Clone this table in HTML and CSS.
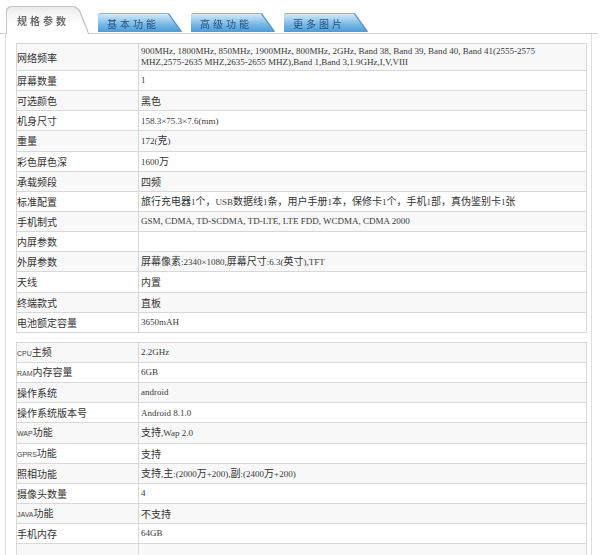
FILE: index.html
```html
<!DOCTYPE html>
<html lang="zh-CN">
<head>
<meta charset="utf-8">
<title>规格参数</title>
<link rel="stylesheet" href="styles.css">
</head>
<body>
<div class="page">
  <div class="tabs">
    <div class="tab-wrap tab-wrap-active"><div class="tab tab-active">规格参数</div></div>
    <div class="tab-wrap tab-wrap-blue"><div class="tab tab-blue">基本功能</div></div>
    <div class="tab-wrap tab-wrap-blue"><div class="tab tab-blue">高级功能</div></div>
    <div class="tab-wrap tab-wrap-blue"><div class="tab tab-blue">更多图片</div></div>
  </div>
  <div class="panel">
    <table class="spec">
      <colgroup><col class="col-label"><col></colgroup>
      <tr class="tall"><td class="k">网络频率</td><td class="v a">900MHz, 1800MHz, 850MHz, 1900MHz, 800MHz, 2GHz, Band 38, Band 39, Band 40, Band 41(2555-2575<br>MHZ,2575-2635 MHZ,2635-2655 MHZ),Band 1,Band 3,1.9GHz,I,V,VIII</td></tr>
      <tr><td class="k">屏幕数量</td><td class="v a">1</td></tr>
      <tr><td class="k">可选颜色</td><td class="v">黑色</td></tr>
      <tr><td class="k">机身尺寸</td><td class="v a">158.3×75.3×7.6(mm)</td></tr>
      <tr><td class="k">重量</td><td class="v"><span class="a">172(</span>克<span class="a">)</span></td></tr>
      <tr><td class="k">彩色屏色深</td><td class="v"><span class="a">1600</span>万</td></tr>
      <tr><td class="k">承载频段</td><td class="v">四频</td></tr>
      <tr><td class="k">标准配置</td><td class="v">旅行充电器<span class="a">1</span>个，<span class="a">USB</span>数据线<span class="a">1</span>条，用户手册<span class="a">1</span>本，保修卡<span class="a">1</span>个，手机<span class="a">1</span>部，真伪鉴别卡<span class="a">1</span>张</td></tr>
      <tr><td class="k">手机制式</td><td class="v a">GSM, CDMA, TD-SCDMA, TD-LTE, LTE FDD, WCDMA, CDMA 2000</td></tr>
      <tr><td class="k">内屏参数</td><td class="v"></td></tr>
      <tr><td class="k">外屏参数</td><td class="v">屏幕像素<span class="a">:2340×1080,</span>屏幕尺寸<span class="a">:6.3(</span>英寸<span class="a">),TFT</span></td></tr>
      <tr><td class="k">天线</td><td class="v">内置</td></tr>
      <tr><td class="k">终端款式</td><td class="v">直板</td></tr>
      <tr><td class="k">电池额定容量</td><td class="v a">3650mAH</td></tr>
    </table>
    <table class="spec spec-second">
      <colgroup><col class="col-label"><col></colgroup>
      <tr><td class="k"><span class="s">CPU</span>主频</td><td class="v a">2.2GHz</td></tr>
      <tr><td class="k"><span class="s">RAM</span>内存容量</td><td class="v a">6GB</td></tr>
      <tr><td class="k">操作系统</td><td class="v a">android</td></tr>
      <tr><td class="k">操作系统版本号</td><td class="v a">Android 8.1.0</td></tr>
      <tr><td class="k"><span class="s">WAP</span>功能</td><td class="v">支持<span class="a">,Wap 2.0</span></td></tr>
      <tr><td class="k"><span class="s">GPRS</span>功能</td><td class="v">支持</td></tr>
      <tr><td class="k">照相功能</td><td class="v">支持<span class="a">,</span>主<span class="a">:(2000</span>万<span class="a">+200),</span>副<span class="a">:(2400</span>万<span class="a">+200)</span></td></tr>
      <tr><td class="k">摄像头数量</td><td class="v a">4</td></tr>
      <tr><td class="k"><span class="s">JAVA</span>功能</td><td class="v">不支持</td></tr>
      <tr><td class="k">手机内存</td><td class="v a">64GB</td></tr>
      <tr><td class="k"></td><td class="v"></td></tr>
    </table>
  </div>
</div>
</body>
</html>
```
FILE: styles.css
```css
html, body {
  margin: 0;
  padding: 0;
  background: #fff;
}

body {
  font-family: "Noto Sans CJK SC", "Noto Sans", sans-serif;
  font-size: 10px;
  color: #333;
  overflow: hidden;
}

.page {
  width: 598px;
}

/* ---------- tabs ---------- */
.tabs {
  display: flex;
  align-items: flex-end;
  gap: 10px;
  height: 33px;
  padding-left: 7px;
  border-bottom: 1px solid #d2d2d2;
}

.tab-wrap-active {
  margin-bottom: -1px;
  filter: drop-shadow(1px 0 0 #c6c6c6) drop-shadow(-1px 0 0 #c6c6c6) drop-shadow(0 -1px 0 #c6c6c6);
}

.tab-wrap-blue {
  margin-bottom: 1px;
  filter: drop-shadow(1px 0 0 #4f8bc2) drop-shadow(0 -1px 0 #86b8e0);
}

.tab {
  display: flex;
  align-items: center;
  font-size: 10px;
  letter-spacing: 3px;
  white-space: nowrap;
}

.tab-active {
  width: 81px;
  height: 27px;
  padding-left: 10px;
  box-sizing: border-box;
  border-top-left-radius: 5px;
  clip-path: polygon(0 0, 67px 0, 72px 4px, 100% 100%, 0 100%);
  background: linear-gradient(to bottom, #e9e9e9 0%, #f7f7f7 30%, #ffffff 70%);
  color: #6a6a6a;
  font-weight: bold;
}

.tab-blue {
  width: 83px;
  height: 18px;
  padding-left: 9px;
  box-sizing: border-box;
  border-top-left-radius: 3px;
  clip-path: polygon(0 0, 70px 0, 100% 100%, 0 100%);
  background: linear-gradient(to bottom, #d4eaf9 0%, #a7d2f0 28%, #74b6e5 60%, #4f9bd7 100%);
  color: #1f4f80;
}

/* ---------- panel ---------- */
.panel {
  box-sizing: border-box;
  width: 587px;
  margin-left: 5px;
  padding: 9px 4px 0 10px;
  border-left: 1px solid #dedede;
  border-right: 1px solid #dedede;
}

.spec {
  width: 100%;
  table-layout: fixed;
  border-collapse: collapse;
  border: 1px solid #cfcfcf;
}

.spec-second {
  margin-top: 9px;
}

.col-label {
  width: 122px;
}

.spec td {
  height: 19.15px;
  padding: 0;
  border: 1px solid #d8d8d8;
  vertical-align: middle;
  line-height: 11px;
}

.spec tr:nth-child(odd) {
  background: #f8f8f8;
}

.spec tr.tall td {
  height: 26px;
}

.k {
  padding-left: 0 !important;
  font-size: 10px;
  color: #333;
  white-space: nowrap;
}

.v {
  padding-left: 2px !important;
  font-size: 10px;
  color: #333;
}

.a {
  font-family: "Liberation Serif", "Noto Sans CJK SC", serif;
  font-size: 9px;
  color: #3a3a3a;
}

.v.a {
  line-height: 10.6px;
}

.s {
  font-family: "Liberation Sans", sans-serif;
  font-size: 7px;
  color: #444;
}
```
